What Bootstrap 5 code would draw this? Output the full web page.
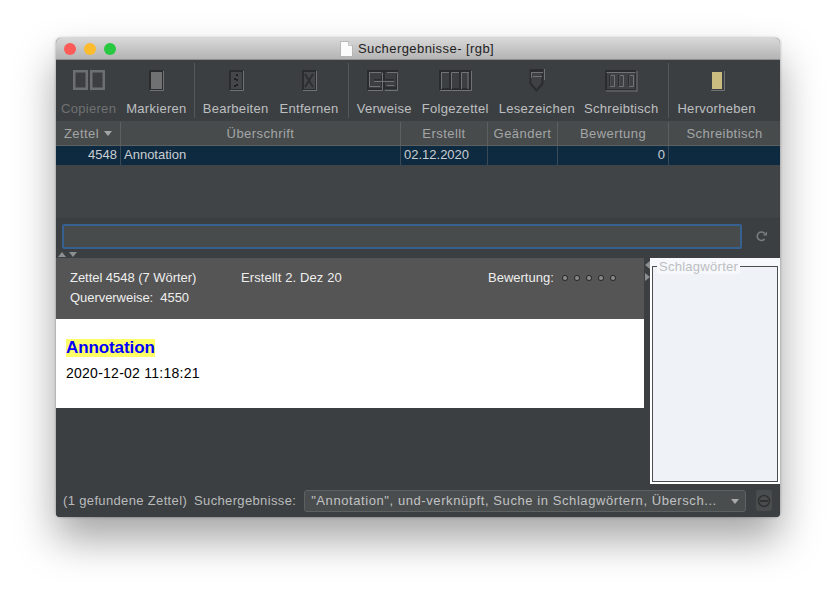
<!DOCTYPE html>
<html lang="de">
<head>
<meta charset="utf-8">
<title>Suchergebnisse</title>
<link href="https://cdn.jsdelivr.net/npm/bootstrap@5.3.0/dist/css/bootstrap.min.css" rel="stylesheet">
<style>
html,body{background:#fff;height:100%;overflow:hidden}
body{font-family:"Liberation Sans",Arial,sans-serif;font-size:13px;padding:38px 0 0 56px}
.win{width:724px;height:479px;border-radius:5px 5px 4px 4px;overflow:hidden;background:#3c3f42}
.win-shadow{width:724px;height:479px;border-radius:5px;box-shadow:0 22px 42px rgba(0,0,0,.36),0 0 3px rgba(0,0,0,.35)}
.titlebar{height:22px;background:linear-gradient(#d8d8d8,#b4b4b4);border-bottom:1px solid #8f8f8f;color:#222;position:relative}
.lights{position:absolute;left:8px;top:5px;gap:8px}
.lamp{width:12px;height:12px;border-radius:50%}
.lamp-r{background:#fc5b57}.lamp-y{background:#fdbc2e}.lamp-g{background:#28c840}
.title-text{line-height:22px;gap:5px;padding-right:2px;letter-spacing:.43px}
.toolbar{height:61px;background:#3c3f42;padding-left:5px}
.tool{display:flex;flex-direction:column;align-items:center;margin-right:10px;color:#bdbfc0;padding-top:4px;letter-spacing:.3px}
.tool span{margin-top:7px;line-height:16px;white-space:nowrap}
.tool svg{display:block;height:30px;width:60px;margin:0 -20px;flex:none}
.tool-off{color:#6f7173}
.tool-tight{margin-right:9px}
.tool-mid{margin-right:11px}
.tool-wide{margin-right:12px}
.tool-widest{margin-right:13px}
.tool-sep{width:1px;background:#55585a;height:55px;margin:3px 8px 0 -3px;flex:none}
.grid-row{display:grid;grid-template-columns:65px 280px 87px 70px 111px 111px}
.head-row{height:25px;background:#484b4c;color:#a3a6a7;border-bottom:1px solid #5d6061}
.head-row>div{text-align:center;line-height:24px;border-right:1px solid #5d6061;margin-top:1px;height:23px;letter-spacing:.45px}
.head-row>div:last-child{border-right:0}
.sort-tri{display:inline-block;border:4.5px solid transparent;border-top:5px solid #a3a6a7;border-bottom:0;margin-left:5px;vertical-align:2px}
.data-row{height:19px;background:#0e2a40;color:#c9ced2;line-height:18px}
.data-row>div{border-right:1px solid #3c4a55;padding:0 3px}
.data-row>div:last-child{border-right:0}
.empty-list{height:53px;background:#414447}
.search-strip{height:34px;background:#3c3f42;padding:5px 0 0 6px;border-top:1px solid #3a3d40}
.search-field{width:680px;height:25px;background:#484b4c;border:2px solid #36608f;border-radius:2px}
.reload{margin-left:13px;width:14px;padding-top:1px}
.arrow-strip{height:6px;gap:3px;padding-left:2px;background:#3c3f42}
.tri-up{border:4.5px solid transparent;border-bottom:5.5px solid #8d9092;border-top:0;height:0;width:0}
.tri-down{border:4.5px solid transparent;border-top:5.5px solid #8d9092;border-bottom:0;height:0;width:0}
.body-split{height:226px}
.left-pane{width:588px}
.info-band{height:61px;background:#555;color:#eee;position:relative}
.info-l1{position:absolute;left:14px;top:11px;line-height:18px;letter-spacing:-.04px}
.info-l2{position:absolute;left:14px;top:31px;line-height:18px;letter-spacing:-.05px}
.info-c{position:absolute;left:185px;top:11px;line-height:18px;letter-spacing:.1px}
.info-r{position:absolute;left:432px;top:11px;line-height:18px;gap:9px}
.dots{gap:8px}
.dot-o{width:4px;height:4px;border-radius:50%;background:#8a8a8a;box-shadow:0 0 0 1px #2e2e2e}
.paper{height:89px;background:#fff;color:#000;padding:20px 10px 0}
.paper-h{display:inline-block;font-size:17px;font-weight:700;color:#00f;background:#ffff66;line-height:18px;margin-bottom:8px;letter-spacing:-.1px}
.paper-t{font-size:14px;line-height:17px;letter-spacing:.25px}
.mid-gutter{width:6px;background:#3c3f42;position:relative}
.g-l{position:absolute;left:1px;top:3px;border:4px solid transparent;border-right:5px solid #8d9092;border-left:0}
.g-r{position:absolute;left:1px;top:15px;border:4px solid transparent;border-left:5px solid #8d9092;border-right:0}
.right-pane{width:130px;background:#fff;padding:8px 2px 2px;position:relative}
.kw-box{height:216px;background:#eff2f7;border:1px solid #4a4d50}
.kw-legend{position:absolute;left:7px;top:1px;background:#f6f8fb;color:#bcbec2;padding:0 2px;line-height:15px;letter-spacing:.27px}
.kw-fill{position:absolute;left:0;right:0;top:0;height:8px;background:#f6f8fb}
.statusbar{height:33px;background:#3c3f42;color:#b9bbbc;padding-left:7px;letter-spacing:.35px}
.status-label{margin-left:7px}
.combo{width:442px;height:22px;margin-left:8px;background:#4a4d4e;border:1px solid #5e6162;border-radius:3px;padding:0 6px;line-height:20px;color:#c0c2c3;letter-spacing:.58px}
.combo-tri{border:4px solid transparent;border-top:5px solid #a8aaab;border-bottom:0;margin-top:1px}
.stop-btn{width:16px;height:21px;margin-left:10px;background:#4a4d4e;border-radius:3px}
</style>
</head>
<body>
<div class="win-shadow">
<div class="win">
  <div class="titlebar d-flex justify-content-center">
    <div class="lights d-flex"><div class="lamp lamp-r"></div><div class="lamp lamp-y"></div><div class="lamp lamp-g"></div></div>
    <div class="title-text d-flex align-items-center">
      <svg width="13" height="16" viewBox="0 0 13 16"><path d="M.5.5H8.5L12.5 4.5V15.5H.5Z" fill="#fbfbfb" stroke="#9a9a9a" stroke-width=".6"/><path d="M8.5.5V4.5H12.5" fill="#ddd" stroke="#aaa" stroke-width=".6"/></svg>
      <span>Suchergebnisse- [rgb]</span>
    </div>
  </div>

  <div class="toolbar d-flex">
    <div class="tool tool-off">
      <svg viewBox="0 0 60 30"><path d="M15.250 7.250h12.500v17.500h-12.500zM32.250 7.250h12.500v17.500h-12.500z" fill="none" stroke="#6c6f70" stroke-width="2.500"/></svg>
      <span>Copieren</span>
    </div>
    <div class="tool">
      <svg viewBox="0 0 60 30"><rect x="23" y="6" width="14" height="20" fill="#2a2c2e"/><rect x="25" y="8" width="11" height="17" fill="#6f7172"/><path d="M37.500 7V26.500H24" fill="none" stroke="#707375"/></svg>
      <span>Markieren</span>
    </div>
    <div class="tool-sep"></div>
    <div class="tool tool-mid">
      <svg viewBox="0 0 60 30"><rect x="23" y="6" width="14" height="20" fill="#2a2c2e"/><rect x="25" y="8" width="11" height="17" fill="#444749"/><path d="M37.500 7V26.500H24" fill="none" stroke="#707375"/><path d="M30 10h2v2h-2zM28 14h2v2h-2zM30 15h2v2h-2zM30 20h2v2h-2zM28 21h2v2h-2z" fill="#1f2122"/></svg>
      <span>Bearbeiten</span>
    </div>
    <div class="tool tool-wide">
      <svg viewBox="0 0 60 30"><rect x="23" y="6" width="14" height="20" fill="#2a2c2e"/><rect x="25" y="8" width="11" height="17" fill="#444749"/><path d="M37.500 7V26.500H24" fill="none" stroke="#707375"/><path d="M26 10l8 13M34 10l-8 13" stroke="#2c2e30" stroke-width="2"/></svg>
      <span>Entfernen</span>
    </div>
    <div class="tool-sep"></div>
    <div class="tool">
      <svg viewBox="0 0 60 30"><path d="M14 7h15v18H14zM30 7h13v17H30z" fill="none" stroke="#2a2c2e" stroke-width="2"/><path d="M20 15h20v1.500H20zM27 11h1v11h-1z" fill="#2a2c2e"/><path d="M15.500 8.500H27M15.500 8.500V22.500H26M28.500 8.500V26.500H14M33 8.500H43.500V26.500H31M20 17.500H40M33 21.500H40" fill="none" stroke="#707375"/></svg>
      <span>Verweise</span>
    </div>
    <div class="tool">
      <svg viewBox="0 0 60 30"><path d="M15 7h30v18H15zM25 7v18M35 7v18" fill="none" stroke="#2a2c2e" stroke-width="2"/><path d="M16.500 8.500H24M16.500 8.500V25M26.500 8.500H34M26.500 8.500V25M36.500 8.500H44M36.500 8.500V25M43 9V25M46.500 7V26.500H15" fill="none" stroke="#707375"/></svg>
      <span>Folgezettel</span>
    </div>
    <div class="tool tool-tight">
      <svg viewBox="0 0 60 30"><path d="M22.500 5h14v15l-7 8-7-8z" fill="#2a2c2e"/><path d="M24.500 8h10v11l-5 6-5-6z" fill="#3f4245"/><path d="M24 8.500H36M26 12.500H35M24.500 9V14" stroke="#707375" fill="none"/><path d="M37.500 5v11" stroke="#707375"/></svg>
      <span>Lesezeichen</span>
    </div>
    <div class="tool tool-widest">
      <svg viewBox="0 0 60 30"><rect x="14" y="6" width="31" height="20" fill="#2a2c2e"/><rect x="16" y="9" width="28" height="16" fill="#3f4245"/><path d="M15.500 8.500H44.500M46 7V27.500M15 27H46" fill="none" stroke="#707375"/><path d="M19.500 11.500h4v11h-4zM28.500 11.500h4v11h-4zM38.500 11.500h4v11h-4z" fill="none" stroke="#707375"/><path d="M18 11h1.500v11H18zM27 11h1.500v11H27zM37 11h1.500v11H37z" fill="#2a2c2e"/></svg>
      <span>Schreibtisch</span>
    </div>
    <div class="tool-sep"></div>
    <div class="tool">
      <svg viewBox="0 0 60 30"><rect x="25" y="8" width="10" height="17" fill="#cbbd7f"/><path d="M37.500 7V26.500H24" fill="none" stroke="#707375"/></svg>
      <span>Hervorheben</span>
    </div>
  </div>

  <div class="grid-row head-row">
    <div>Zettel<i class="sort-tri"></i></div><div>Überschrift</div><div>Erstellt</div><div>Geändert</div><div>Bewertung</div><div>Schreibtisch</div>
  </div>
  <div class="grid-row data-row">
    <div class="text-end">4548</div><div>Annotation</div><div>02.12.2020</div><div></div><div class="text-end">0</div><div></div>
  </div>
  <div class="empty-list"></div>

  <div class="search-strip d-flex">
    <div class="search-field"></div>
    <div class="reload"><svg width="14" height="22" viewBox="0 0 14 22"><path d="M9.600 8.500A4.200 4.200 0 1 0 9.600 14" fill="none" stroke="#7b7e80" stroke-width="1.600"/><path d="M8 10.500h4v-4z" fill="#7b7e80"/></svg></div>
  </div>
  <div class="arrow-strip d-flex"><div class="tri-up"></div><div class="tri-down"></div></div>

  <div class="body-split d-flex">
    <div class="left-pane">
      <div class="info-band">
        <div class="info-l1">Zettel 4548 (7 Wörter)</div>
        <div class="info-c">Erstellt 2. Dez 20</div>
        <div class="info-r d-flex align-items-center"><span>Bewertung:</span>
          <div class="dots d-flex"><i class="dot-o"></i><i class="dot-o"></i><i class="dot-o"></i><i class="dot-o"></i><i class="dot-o"></i></div>
        </div>
        <div class="info-l2">Querverweise:&nbsp; 4550</div>
      </div>
      <div class="paper">
        <div class="paper-h">Annotation</div>
        <div class="paper-t">2020-12-02 11:18:21</div>
      </div>
    </div>
    <div class="mid-gutter"><i class="g-l"></i><i class="g-r"></i></div>
    <div class="right-pane">
      <div class="kw-fill"></div>
      <div class="kw-box"></div>
      <div class="kw-legend">Schlagwörter</div>
    </div>
  </div>

  <div class="statusbar d-flex align-items-center">
    <span>(1 gefundene Zettel)</span><span class="status-label">Suchergebnisse:</span>
    <div class="combo d-flex justify-content-between align-items-center">
      <span class="text-nowrap overflow-hidden">"Annotation", und-verknüpft, Suche in Schlagwörtern, Übersch...</span><i class="combo-tri"></i>
    </div>
    <div class="stop-btn d-flex align-items-center justify-content-center"><svg width="14" height="14" viewBox="0 0 14 14"><circle cx="7" cy="7" r="5.500" fill="none" stroke="#2f3133" stroke-width="1.500"/><path d="M3 7h8" stroke="#2f3133" stroke-width="2"/></svg></div>
  </div>
</div>
</div>
<script src="https://cdn.jsdelivr.net/npm/bootstrap@5.3.0/dist/js/bootstrap.bundle.min.js"></script>
</body>
</html>
